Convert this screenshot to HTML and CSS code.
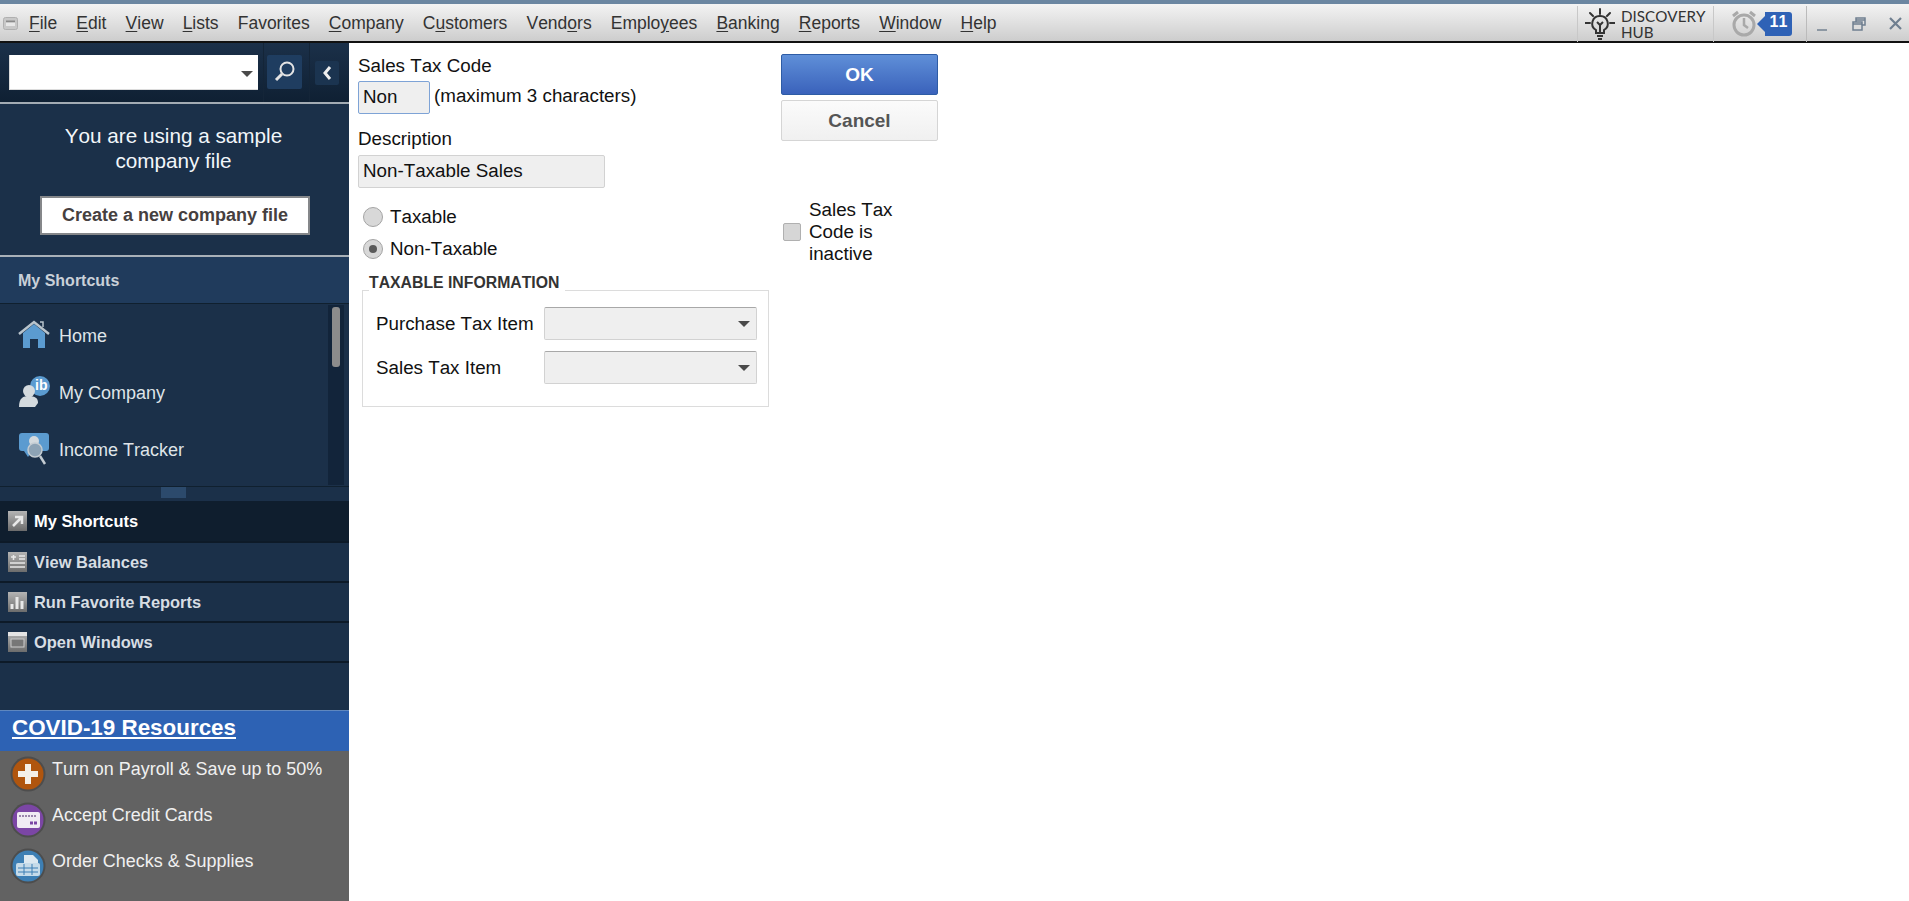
FILE: index.html
```html
<!DOCTYPE html>
<html lang="en">
<head>
<meta charset="utf-8">
<title>Sales Tax Code</title>
<link rel="stylesheet" href="styles.css">
</head>
<body>
<div class="topstrip"></div>
<header class="menubar">
  <svg class="sysicon" width="16" height="14" viewBox="0 0 16 14"><rect x="0.5" y="0.5" width="14" height="12" rx="2" fill="#c8c8c8" stroke="#b0b0b0"/><rect x="3" y="3.5" width="9" height="1.5" fill="#8a8a8a"/><rect x="3" y="6" width="9" height="3" fill="#e8e8e8"/></svg>
  <nav class="menus">
    <span class="menu"><u>F</u>ile</span>
    <span class="menu"><u>E</u>dit</span>
    <span class="menu"><u>V</u>iew</span>
    <span class="menu"><u>L</u>ists</span>
    <span class="menu">Favorites</span>
    <span class="menu"><u>C</u>ompany</span>
    <span class="menu">C<u>u</u>stomers</span>
    <span class="menu">Vend<u>o</u>rs</span>
    <span class="menu">Emplo<u>y</u>ees</span>
    <span class="menu"><u>B</u>anking</span>
    <span class="menu"><u>R</u>eports</span>
    <span class="menu"><u>W</u>indow</span>
    <span class="menu"><u>H</u>elp</span>
  </nav>
  <div class="tools">
    <div class="hub">
      <svg width="30" height="32" viewBox="0 0 30 32" fill="none" stroke="#333" stroke-width="2"><path d="M15 1v5M5 5l3 3M25 5l-3 3M0 15h5M25 15h5" stroke-linecap="round"/><path d="M15 8a7.5 7.5 0 0 0-4 14v3h8v-3a7.500 7.500 0 0 0-4-14z"/><path d="M12 14l3 3 3-3M15 17v8M12 28h6M13 31h4"/></svg>
      <span class="hubtext">DISCOVERY<br>HUB</span>
    </div>
    <div class="alarm">
      <svg width="26" height="28" viewBox="0 0 26 28" fill="none" stroke="#a9a9a9"><circle cx="13" cy="15" r="10" stroke-width="3"/><path d="M13 8v7l4 3" stroke-width="2.500"/><path d="M2 6l5-4M24 6l-5-4" stroke-width="3"/></svg>
      <span class="badge">11</span>
    </div>
    <div class="winctl">
      <span class="minimize"></span>
      <svg width="14" height="14" viewBox="0 0 14 14" fill="none" stroke="#6f7f90" stroke-width="1.500"><rect x="4" y="1" width="9" height="7"/><rect x="1" y="5" width="9" height="8" fill="#ddd"/><path d="M1 7h9M4 3h9"/></svg>
      <svg width="13" height="13" viewBox="0 0 13 13" stroke="#6f7f90" stroke-width="2.200"><path d="M1 1l11 11M12 1L1 12"/></svg>
    </div>
  </div>
</header>
<div class="app">
  <aside class="sidebar">
    <div class="searchbar">
      <div class="searchcell fieldcell"><div class="searchfield"><span class="caret"></span></div></div>
      <div class="searchcell btncell"><div class="searchbtn"><svg width="22" height="24" viewBox="0 0 22 24" fill="none" stroke="#e4e4e4"><circle cx="13" cy="9" r="6.500" stroke-width="2"/><path d="M8 14l-6 6" stroke-width="3"/></svg></div></div>
      <div class="searchcell arrowcell"><div class="collapsebtn"><svg width="10" height="14" viewBox="0 0 10 14" fill="none" stroke="#eee" stroke-width="3"><path d="M8 1L3 7l5 6"/></svg></div></div>
    </div>
    <div class="sample">
      <p class="sampletext">You are using a sample<br>company file</p>
      <div class="createbtn">Create a new company file</div>
    </div>
    <div class="shortcuthead">My Shortcuts</div>
    <div class="shortcutlist">
      <div class="shortcutitems">
        <div class="shortcut">
          <svg width="32" height="30" viewBox="0 0 32 30"><path d="M5 13L16 4l11 9v15h-7v-9h-8v9H5z" fill="#5b9bd0"/><path d="M1 14L16 2l15 12" fill="none" stroke="#b9c4cc" stroke-width="2.500"/><path d="M22 2h3v5" fill="none" stroke="#b9c4cc" stroke-width="1.500"/></svg>
          <span>Home</span>
        </div>
        <div class="shortcut">
          <svg width="32" height="32" viewBox="0 0 32 32"><circle cx="22" cy="10" r="10" fill="#5b9bd0"/><text class="ibtext" x="17" y="14">ib</text><circle cx="11" cy="15" r="6" fill="#d4dade"/><path d="M1 31c0-9 4-11 10-11s9 2 9 7l-3 4z" fill="#d4dade"/></svg>
          <span>My Company</span>
        </div>
        <div class="shortcut">
          <svg width="32" height="34" viewBox="0 0 32 34"><rect x="1" y="1" width="30" height="18" rx="3" fill="#5b9bd0"/><path d="M6 19l4 6 4-6z" fill="#5b9bd0"/><circle cx="16" cy="9" r="5" fill="#d4dade"/><circle cx="17" cy="18" r="7" fill="#8da3b5" stroke="#c4ccd2" stroke-width="1.500"/><path d="M22 24l5 8" stroke="#c4ccd2" stroke-width="2.500"/></svg>
          <span>Income Tracker</span>
        </div>
      </div>
      <div class="scrolltrack"><div class="scrollthumb"></div></div>
    </div>
    <div class="splitter"><span class="grip"></span></div>
    <div class="navitem active">
      <svg class="navicon" viewBox="0 0 19 20"><defs><linearGradient id="navgrad" x1="0" y1="0" x2="0" y2="1"><stop offset="0" stop-color="#b4b4b4"/><stop offset="1" stop-color="#6c6c6c"/></linearGradient></defs><rect width="19" height="20" fill="url(#navgrad)"/><path d="M5 15l8-8M7 6h7v7" fill="none" stroke="#e8e8e8" stroke-width="2.500"/></svg>
      <span>My Shortcuts</span>
    </div>
    <div class="navitem">
      <svg class="navicon" viewBox="0 0 19 20"><rect width="19" height="20" fill="url(#navgrad)"/><path d="M3 5h5M5.500 3v5M11 4h6M11 7h6M2 11h15M2 15h15" stroke="#e8e8e8" stroke-width="1.500"/></svg>
      <span>View Balances</span>
    </div>
    <div class="navitem">
      <svg class="navicon" viewBox="0 0 19 20"><rect width="19" height="20" fill="url(#navgrad)"/><path d="M4 17v-5M9 17V5M14 17V9" stroke="#e8e8e8" stroke-width="3"/></svg>
      <span>Run Favorite Reports</span>
    </div>
    <div class="navitem">
      <svg class="navicon" viewBox="0 0 19 20"><rect width="19" height="20" fill="url(#navgrad)"/><rect width="19" height="4" fill="#e4e4e4"/><rect x="3" y="7" width="13" height="8" fill="#777" stroke="#ccc"/></svg>
      <span>Open Windows</span>
    </div>
    <div class="sidefill"></div>
    <div class="covid"><a class="covidlink">COVID-19 Resources</a></div>
    <div class="promos">
      <div class="promo">
        <svg width="36" height="36" viewBox="0 0 36 36"><circle cx="18" cy="18" r="17.500" fill="#4d4d4d"/><circle cx="18" cy="18" r="15.500" fill="#b0550e"/><path d="M15 8h6v7h7v6h-7v7h-6v-7H8v-6h7z" fill="#f4efe8"/></svg>
        <span>Turn on Payroll &amp; Save up to 50%</span>
      </div>
      <div class="promo">
        <svg width="36" height="36" viewBox="0 0 36 36"><circle cx="18" cy="18" r="17.500" fill="#4d4d4d"/><circle cx="18" cy="18" r="15.500" fill="#7b46a5"/><rect x="7" y="10" width="23" height="16" rx="2" fill="#f0ecf4"/><path d="M9 14h17" stroke="#9b86ad" stroke-width="2" stroke-dasharray="2 1"/><path d="M20 21h7" stroke="#7b46a5" stroke-width="3" stroke-dasharray="3 1"/></svg>
        <span>Accept Credit Cards</span>
      </div>
      <div class="promo">
        <svg width="36" height="36" viewBox="0 0 36 36"><circle cx="18" cy="18" r="17.500" fill="#4d4d4d"/><circle cx="18" cy="18" r="15.500" fill="#3d7fb4"/><path d="M14 7h9l5 5v6H14z" fill="#dce8f0"/><rect x="6" y="15" width="24" height="13" rx="2" fill="#c6dbe9"/><path d="M8 20h20M8 24h20M14 16v11M22 16v11" stroke="#3d7fb4"/></svg>
        <span>Order Checks &amp; Supplies</span>
      </div>
    </div>
  </aside>
  <main class="content">
    <form class="formcol">
      <label class="fieldlabel">Sales Tax Code</label>
      <div class="coderow">
        <div class="input codeinput">Non</div>
        <span class="codehint">(maximum 3 characters)</span>
      </div>
      <label class="fieldlabel desclabel">Description</label>
      <div class="input descinput">Non-Taxable Sales</div>
      <div class="radios">
        <div class="radiorow"><span class="radio"></span>Taxable</div>
        <div class="radiorow"><span class="radio checked"></span>Non-Taxable</div>
      </div>
      <fieldset class="taxinfo">
        <legend>TAXABLE INFORMATION</legend>
        <div class="taxrow"><span class="taxlabel">Purchase Tax Item</span><div class="select"><span class="caret"></span></div></div>
        <div class="taxrow"><span class="taxlabel">Sales Tax Item</span><div class="select"><span class="caret"></span></div></div>
      </fieldset>
    </form>
    <div class="actioncol">
      <div class="btn ok">OK</div>
      <div class="btn cancel">Cancel</div>
      <div class="inactive">
        <span class="checkbox"></span>
        <span class="inactivetext">Sales Tax Code is inactive</span>
      </div>
    </div>
  </main>
</div>
</body>
</html>
```
FILE: styles.css
```css
* { box-sizing: border-box; }
html, body { margin: 0; height: 100%; }
body {
  width: 1909px;
  height: 901px;
  overflow: hidden;
  display: flex;
  flex-direction: column;
  background: #fff;
  color: #111;
  font-family: "Liberation Sans", Arial, sans-serif;
  font-size: 18.800px;
  font-kerning: none;
}
.topstrip { height: 4px; background: #6b86a1; flex: none; }
.menubar {
  flex: none;
  height: 39px;
  display: flex;
  align-items: center;
  padding: 2px 0 0 3px;
  background: linear-gradient(#f3f3f3, #e6e6e6 35%, #cdcdcd);
  border-bottom: 2px solid #111;
}
.sysicon { flex: none; }
.menus { display: flex; margin-left: 10px; gap: 19.100px; font-size: 17.500px; color: #333; }
.menu u { text-underline-offset: 2px; }
.tools { margin-left: auto; display: flex; align-items: center; height: 100%; }
.hub {
  width: 137px;
  height: 36px;
  display: flex;
  align-items: center;
  gap: 6px;
  padding-left: 7px;
  border-left: 1px solid #c8c8c8;
  border-right: 1px solid #c8c8c8;
}
.hubtext { font-family: Lato, sans-serif; font-size: 15.200px; line-height: 15.500px; color: #333; margin-top: 2px; }
.alarm { display: flex; align-items: center; width: 93px; padding-left: 17px; height: 36px; border-right: 1px solid #bbb; }
.badge {
  position: relative;
  width: 27px;
  height: 24px;
  margin-left: 8px;
  background: #2f62b6;
  border-radius: 0 3px 3px 0;
  color: #fff;
  font-size: 16px;
  font-weight: bold;
  line-height: 20px;
  text-align: center;
}
.badge::before {
  content: "";
  position: absolute;
  left: -8px;
  top: 4px;
  border-style: solid;
  border-width: 8px 8px 8px 0;
  border-color: transparent #2f62b6 transparent transparent;
}
.winctl { width: 102px; display: flex; align-items: center; padding-left: 10px; gap: 23px; }
.minimize { width: 10px; height: 2px; margin-top: 12px; background: #8d98a3; margin-right: 2px; }
.app { flex: 1; display: flex; min-height: 0; }
.sidebar { width: 349px; flex: none; display: flex; flex-direction: column; background: #1b3049; }
.searchbar {
  height: 61px;
  flex: none;
  display: flex;
  background: linear-gradient(#1b3049, #0f2033);
  border-bottom: 2px solid #a3abb3;
}
.searchcell { padding-top: 12px; }
.fieldcell { width: 263px; padding-left: 9px; }
.btncell { width: 47px; padding-left: 3px; border-left: 1px solid #142538; border-right: 1px solid #142538; }
.arrowcell { padding: 18px 0 0 5px; }
.searchfield { width: 249px; height: 35px; background: #fff; position: relative; border: 1px solid #dcdcdc; border-top: 0; border-right: 0; }
.searchfield .caret { position: absolute; right: 5px; top: 16px; }
.caret { display: block; width: 0; height: 0; border-style: solid; border-width: 6px 6px 0; border-color: #4a4a4a transparent transparent; }
.searchbtn { width: 35px; height: 34px; background: #1f3d60; border-radius: 2px; display: flex; align-items: center; justify-content: center; }
.collapsebtn { width: 24px; height: 24px; background: #1b3450; border-radius: 2px; display: flex; align-items: center; justify-content: center; }
.sample {
  flex: none;
  height: 153px;
  background: #1b3049;
  border-bottom: 2px solid #a9b0b8;
  display: flex;
  flex-direction: column;
  align-items: center;
  padding-top: 19px;
  color: #f2f6fa;
}
.sampletext { margin: 0 0 0 -2px; font-size: 20.700px; line-height: 25px; text-align: center; }
.createbtn {
  margin-top: 23px;
  margin-left: 1px;
  width: 270px;
  height: 39px;
  background: #fff;
  border: 2px solid #85878a;
  color: #46403f;
  font-size: 18px;
  font-weight: bold;
  line-height: 35px;
  text-align: center;
}
.shortcuthead {
  flex: none;
  height: 47px;
  background: #203b5c;
  border-bottom: 1px solid #10202f;
  color: #c9d0d8;
  font-size: 16px;
  font-weight: bold;
  line-height: 47px;
  padding-left: 18px;
}
.shortcutlist { flex: none; height: 183px; display: flex; border-bottom: 1px solid #10202f; background: #1b3049; position: relative; }
.shortcutitems { flex: 1; padding-top: 4px; }
.shortcut {
  height: 57px;
  display: flex;
  align-items: center;
  gap: 9px;
  padding-left: 18px;
  color: #dfe4e8;
  font-size: 18px;
}
.shortcut svg { flex: none; margin-top: -4px; }
.ibtext { fill: #fff; font-size: 14px; font-weight: bold; }
.scrolltrack { width: 16px; margin: 1px 5px 1px 0; background: #12243a; padding: 2px 4px 0; }
.scrollthumb { width: 8px; height: 60px; background: #8c8c8c; border-radius: 3px; }
.splitter { flex: none; height: 14px; display: flex; justify-content: center; background: #1b3049; }
.grip { width: 25px; height: 11px; margin-left: -2px; background: #2c4a6c; }
.navitem {
  flex: none;
  height: 40px;
  display: flex;
  align-items: center;
  gap: 7px;
  padding-left: 8px;
  border-bottom: 2px solid #0d1a28;
  color: #d7dde3;
  font-size: 16.450px;
  font-weight: bold;
  background: #1b3049;
}
.navitem.active { background: #0f1e2e; color: #fff; height: 42px; }
.navicon { width: 19px; height: 20px; flex: none; }
.sidefill { flex: 1; background: #1b3049; }
.covid { flex: none; height: 41px; background: #2d62b4; border-top: 1px solid #5f87bf; padding: 4px 0 0 12px; }
.covidlink { color: #fff; font-size: 22.400px; font-weight: bold; text-decoration: underline; }
.promos { flex: none; height: 150px; background: #626262; padding-top: 3px; }
.promo {
  height: 45.800px;
  display: flex;
  align-items: flex-start;
  gap: 6px;
  padding: 2px 0 0 10px;
  color: #f0f0f0;
  font-size: 17.950px;
}
.promo svg { flex: none; }
.promo span { margin-top: 3px; }
.content { flex: 1; display: flex; padding: 10px 0 0 9px; color: #111; }
.formcol { width: 423px; display: flex; flex-direction: column; }
.fieldlabel { line-height: 22px; margin-top: 2px; }
.coderow { display: flex; align-items: center; gap: 4px; margin-top: 4px; }
.codehint { margin-bottom: 3px; }
.input {
  background: #efefef;
  border: 1px solid #d2d2d2;
  border-radius: 2px;
  height: 33px;
  line-height: 30px;
  padding-left: 4px;
}
.codeinput { width: 72px; border-color: #7ea3d6; }
.desclabel { margin-top: 14px; }
.descinput { width: 247px; margin-top: 5px; }
.radios { margin-top: 13px; }
.radiorow { height: 32px; display: flex; align-items: center; gap: 7px; padding-left: 5px; }
.radio {
  width: 20px;
  height: 20px;
  border-radius: 50%;
  background: #d8d8d8;
  border: 1px solid #a4a4a4;
  position: relative;
}
.radio.checked::after {
  content: "";
  position: absolute;
  left: 5px;
  top: 5px;
  width: 8px;
  height: 8px;
  border-radius: 50%;
  background: #5a5a5a;
}
.taxinfo {
  margin: 9px 0 0 4px;
  padding: 1px 9px 0 13px;
  width: 407px;
  height: 133px;
  border: 1px solid #dcdcdc;
  min-width: 0;
}
.taxinfo legend {
  padding: 0 6px 14px 0;
  margin-left: -7px;
  font-size: 15.800px;
  font-weight: bold;
  color: #333;
  line-height: 18px;
}
.taxrow { display: flex; align-items: center; height: 33px; margin-bottom: 11px; }
.taxlabel { width: 168px; flex: none; }
.select {
  width: 213px;
  height: 33px;
  background: #efefef;
  border: 1px solid #d2d2d2;
  border-top-color: #a8a8a8;
  border-radius: 2px;
  display: flex;
  align-items: center;
  justify-content: flex-end;
  padding-right: 6px;
}
.actioncol { width: 157px; padding-top: 1px; }
.btn {
  height: 41px;
  border-radius: 2px;
  font-size: 19px;
  font-weight: bold;
  line-height: 39px;
  text-align: center;
}
.ok { background: linear-gradient(#5f8fd8, #3a62bb); border: 1px solid #2e5ca5; color: #fff; }
.cancel { margin-top: 5px; background: linear-gradient(#fbfbfb, #f0f0f0); border: 1px solid #d5d5d5; color: #555; }
.inactive { display: flex; align-items: center; margin-top: 58px; padding-left: 2px; gap: 8px; }
.checkbox { width: 18px; height: 18px; background: #d6d6d6; border: 1px solid #b0b0b0; border-radius: 2px; flex: none; }
.inactivetext { width: 100px; line-height: 22px; }
```
